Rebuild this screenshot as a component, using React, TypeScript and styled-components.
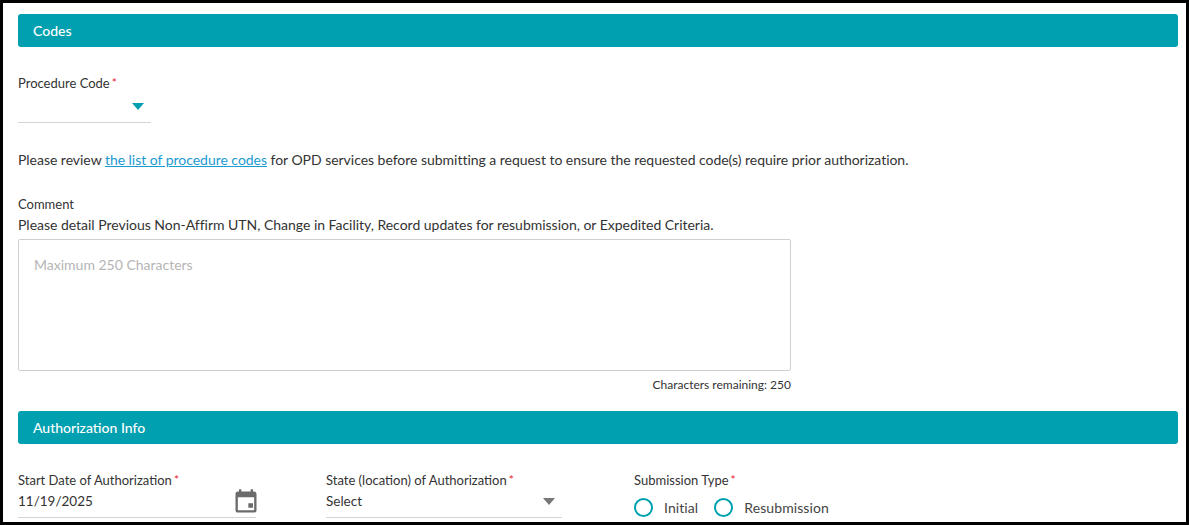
import React from "react";
import styled, { createGlobalStyle } from "styled-components";

const GlobalStyle = createGlobalStyle`
  html, body {
    margin: 0;
    padding: 0;
    background: #000;
  }
  body {
    font-family: Lato, "Open Sans", sans-serif;
    color: #333;
  }
`;

const Frame = styled.div`
  box-sizing: border-box;
  width: 1189px;
  height: 525px;
  border: 3px solid #000;
  background: #fff;
  overflow: hidden;
  padding: 11px 8px 0 15px;
`;

const SectionBar = styled.div`
  height: 33px;
  background: #00a0b0;
  border-radius: 3px;
  color: #fff;
  font-size: 14px;
  font-weight: 500;
  line-height: 33px;
  padding-left: 15px;
`;

const Label = styled.div`
  font-size: 13px;
  line-height: 17px;
  color: #333;
`;

const Required = styled.span`
  color: #e8212b;
  font-size: 12px;
  margin-left: 2px;
  position: relative;
  top: -1px;
`;

const CodeField = styled.div`
  margin-top: 28px;
  width: 133px;
`;

const CodeSelect = styled.div`
  height: 31px;
  border-bottom: 1px solid #d4d4d4;
  display: flex;
  justify-content: flex-end;
  padding: 11px 7px 0 0;
  box-sizing: border-box;
`;

const Caret = styled.svg<{ $color: string }>`
  width: 12px;
  height: 7px;
  fill: ${(p) => p.$color};
  display: block;
`;

const Notice = styled.p`
  margin: 28px 0 0;
  font-size: 14px;
  line-height: 17px;
  letter-spacing: -0.03px;
  color: #333;
`;

const NoticeLink = styled.a`
  color: #1b9ad1;
  text-decoration: underline;
`;

const CommentBlock = styled.div`
  margin-top: 28px;
  width: 773px;
`;

const CommentHint = styled.div`
  font-size: 14px;
  line-height: 17px;
  letter-spacing: -0.02px;
  margin-top: 3px;
  color: #333;
`;

const CommentBox = styled.div`
  box-sizing: border-box;
  height: 132px;
  margin-top: 6px;
  border: 1px solid #cfcfcf;
  border-radius: 2px;
  padding: 16px 15px;
  font-size: 14px;
  line-height: 17px;
  color: #b5b5b5;
`;

const Counter = styled.div`
  font-size: 12px;
  line-height: 14px;
  margin-top: 7px;
  text-align: right;
  color: #333;
`;

const AuthBar = styled(SectionBar)`
  margin-top: 19px;
`;

const AuthRow = styled.div`
  display: flex;
  margin-top: 28px;
`;

const DateField = styled.div`
  width: 308px;
  flex: none;
`;

const StateField = styled.div`
  width: 308px;
  flex: none;
`;

const ValueLine = styled.div<{ $width: number }>`
  box-sizing: border-box;
  width: ${(p) => p.$width}px;
  height: 29px;
  border-bottom: 1px solid #d4d4d4;
  display: flex;
  align-items: flex-start;
  justify-content: space-between;
  font-size: 13.5px;
  line-height: 17px;
  padding-top: 4px;
  color: #333;
`;

const CalendarIcon = styled.svg`
  width: 28px;
  height: 28px;
  fill: #6b6b6b;
  margin: -5px -4px 0 0;
  display: block;
`;

const StateCaret = styled.div`
  margin: 5px 7px 0 0;
`;

const RadioRow = styled.div`
  display: flex;
  align-items: center;
  margin-top: 9px;
`;

const RadioItem = styled.label`
  display: flex;
  align-items: center;
  font-size: 14px;
  line-height: 19px;
  letter-spacing: 0.09px;
  color: #444;
  margin-right: 16px;
`;

const RadioCircle = styled.span`
  box-sizing: border-box;
  width: 19px;
  height: 19px;
  border: 2px solid #00a0b0;
  border-radius: 50%;
  margin-right: 11px;
`;

export default function App() {
  return (
    <>
      <GlobalStyle />
      <Frame>
        <SectionBar>Codes</SectionBar>
        <CodeField>
          <Label>
            Procedure Code<Required>*</Required>
          </Label>
          <CodeSelect>
            <Caret $color="#00a0b0" viewBox="0 0 12 7">
              <path d="M0 0h12L6 7z" />
            </Caret>
          </CodeSelect>
        </CodeField>
        <Notice>
          Please review <NoticeLink href="#">the list of procedure codes</NoticeLink> for OPD services before
          submitting a request to ensure the requested code(s) require prior authorization.
        </Notice>
        <CommentBlock>
          <Label>Comment</Label>
          <CommentHint>
            Please detail Previous Non-Affirm UTN, Change in Facility, Record updates for resubmission, or Expedited
            Criteria.
          </CommentHint>
          <CommentBox>Maximum 250 Characters</CommentBox>
          <Counter>Characters remaining: 250</Counter>
        </CommentBlock>
        <AuthBar>Authorization Info</AuthBar>
        <AuthRow>
          <DateField>
            <Label>
              Start Date of Authorization<Required>*</Required>
            </Label>
            <ValueLine $width={238}>
              11/19/2025
              <CalendarIcon viewBox="0 0 24 24">
                <path d="M19 3h-1V1h-2v2H8V1H6v2H5c-1.11 0-2 .9-2 2v14c0 1.1.89 2 2 2h14c1.1 0 2-.9 2-2V5c0-1.1-.9-2-2-2zm0 16H5V8h14v11zm-5-6h4v4h-4z" />
              </CalendarIcon>
            </ValueLine>
          </DateField>
          <StateField>
            <Label>
              State (location) of Authorization<Required>*</Required>
            </Label>
            <ValueLine $width={236}>
              Select
              <StateCaret>
                <Caret $color="#777" viewBox="0 0 12 7">
                  <path d="M0 0h12L6 7z" />
                </Caret>
              </StateCaret>
            </ValueLine>
          </StateField>
          <div>
            <Label>
              Submission Type<Required>*</Required>
            </Label>
            <RadioRow>
              <RadioItem>
                <RadioCircle />
                Initial
              </RadioItem>
              <RadioItem>
                <RadioCircle />
                Resubmission
              </RadioItem>
            </RadioRow>
          </div>
        </AuthRow>
      </Frame>
    </>
  );
}
